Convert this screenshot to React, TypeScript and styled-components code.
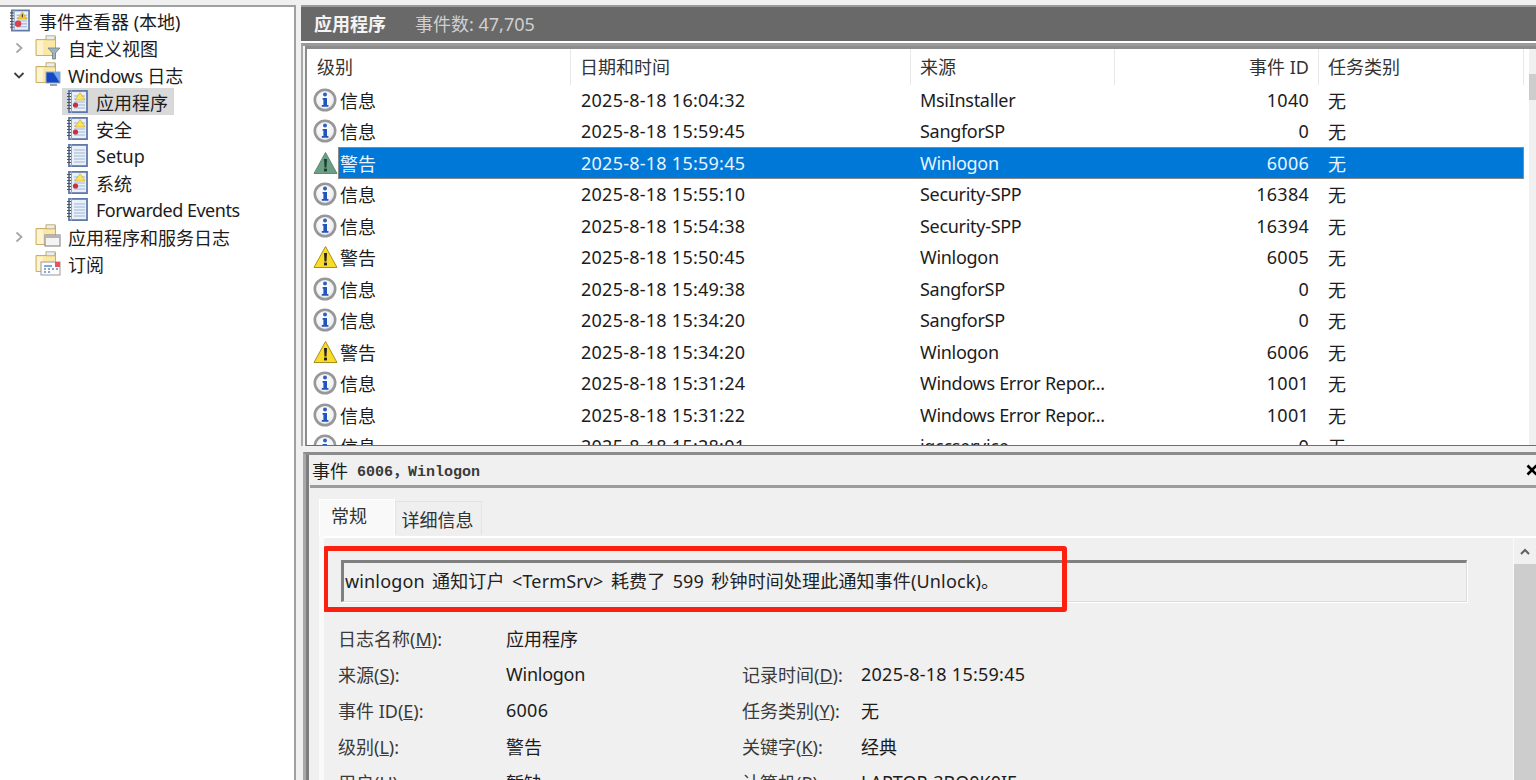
import React from "react";
import styled, { createGlobalStyle } from "styled-components";

const Global = createGlobalStyle`
  html, body { margin: 0; padding: 0; width: 1536px; height: 780px; overflow: hidden; background: #f0f0f0; }
  #root { width: 1536px; height: 780px; }
  * { box-sizing: border-box; }
`;

const Page = styled.div`
  width: 1536px;
  height: 780px;
  overflow: hidden;
  display: flex;
  gap: 5px;
  padding-top: 5px;
  background: #f0f0f0;
  font-family: "Noto Sans", "Noto Sans CJK SC", sans-serif;
  font-size: 18px;
  color: #1c1c1c;
`;
const Latin = styled.span<{ $s?: number }>`
  letter-spacing: ${(p) => p.$s ?? -0.3}px;
`;

/* ---------- tree ---------- */
const TreePane = styled.nav`
  width: 296px;
  flex: none;
  height: 775px;
  background: #fff;
  border-top: 2px solid #a0a0a0;
  border-right: 2px solid #a0a0a0;
`;
const TreeRow = styled.div<{ $level: number }>`
  height: 27px;
  display: flex;
  align-items: center;
  padding-left: ${(p) => (p.$level === 0 ? 9 : p.$level === 1 ? 12 : 62)}px;
  white-space: nowrap;
`;
const Chevron = styled.span`
  width: 14px;
  height: 14px;
  margin-right: 5px;
  flex: none;
  display: flex;
`;
const ChevronSpacer = styled.span`
  width: 14px;
  margin-right: 5px;
  flex: none;
`;
const NodeBody = styled.span<{ $active?: boolean }>`
  display: flex;
  align-items: center;
  gap: ${(p) => (p.$active !== undefined ? 8 : 7)}px;
  height: 27px;
  padding: 0 6px 0 4px;
  background: ${(p) => (p.$active ? "#d9d9d9" : "transparent")};
`;
const RootBody = styled.span`
  display: flex;
  align-items: center;
  gap: 9px;
`;

/* ---------- right side ---------- */
const Right = styled.main`
  flex: 1;
  min-width: 0;
  height: 775px;
  display: flex;
  flex-direction: column;
`;
const TitleBar = styled.header`
  height: 36px;
  flex: none;
  background: #696969;
  border-top: 2px solid #9a9a9a;
  display: flex;
  align-items: center;
  gap: 29px;
  padding: 0 0 3px 13px;
  color: #f4f4f4;
`;
const TitleMain = styled.b`
  font-weight: 700;
  font-size: 18px;
`;
const TitleCount = styled.span`
  color: #d0d0d0;
`;
const ListOuter = styled.section`
  height: 405px;
  flex: none;
  border-top: 2px solid #fff;
  background: #f0f0f0;
`;
const ListFrame = styled.div`
  height: 100%;
  border-top: 3px solid #9a9a9a;
  border-left: 2px solid #a8a8a8;
  padding: 0 0 0 2px;
  background: #f4f4f4;
`;
const ListInner = styled.div`
  height: 100%;
  border-top: 3px solid #8c8c8c;
  border-left: 2px solid #8c8c8c;
  border-bottom: 1px solid #6e6e6e;
  display: flex;
  background: #fff;
  overflow: hidden;
`;
const ListMain = styled.div`
  width: 1222px;
  flex: none;
  overflow: hidden;
`;
const columns = "233px 340px 204px 204px 205px";
const HeaderRow = styled.div`
  height: 35px;
  display: grid;
  grid-template-columns: 264px 340px 204px 204px 205px;
  align-items: start;
  color: #333;
`;
const HeaderCell = styled.div<{ $right?: boolean; $first?: boolean }>`
  display: flex;
  align-items: center;
  justify-content: ${(p) => (p.$right ? "flex-end" : "flex-start")};
  padding: 0 9px 3px ${(p) => (p.$first ? 10 : 9)}px;
  border-right: 1px solid #e8e8e8;
  height: 36px;
`;
const Row = styled.div`
  height: 31.5px;
  display: flex;
  align-items: center;
`;
const LevelIcon = styled.span`
  width: 31px;
  height: 31.5px;
  flex: none;
  display: flex;
  align-items: center;
  padding-left: 6px;
`;
const RowBody = styled.div<{ $selected?: boolean }>`
  width: 1186px;
  height: 31.5px;
  display: grid;
  grid-template-columns: ${columns};
  align-items: center;
  background: ${(p) => (p.$selected ? "#0078d7" : "transparent")};
  color: ${(p) => (p.$selected ? "#e8f4ff" : "#1c1c1c")};
  outline: ${(p) => (p.$selected ? "1px solid #8a8a8a" : "none")};
  outline-offset: -1px;
`;
const Cell = styled.span<{ $right?: boolean; $pad?: number; $s?: number }>`
  padding: 0 ${(p) => (p.$right ? 10 : 0)}px 0 ${(p) => (p.$pad ?? 9)}px;
  text-align: ${(p) => (p.$right ? "right" : "left")};
  letter-spacing: ${(p) => p.$s ?? 0}px;
  white-space: nowrap;
  overflow: hidden;
`;
const ListScroll = styled.div`
  width: 7px;
  flex: none;
  background: #f0f0f0;
  padding-top: 25px;
`;
const ListThumb = styled.div`
  height: 26px;
  background: #cdcdcd;
`;

/* ---------- detail ---------- */
const Detail = styled.section`
  flex: 1;
  min-height: 0;
  margin-left: 2px;
  background: #f0f0f0;
  padding-top: 6px;
  display: flex;
  flex-direction: column;
`;
const DetailFrame = styled.div`
  flex: 1;
  min-height: 0;
  border-top: 3px solid #8c8c8c;
  border-left: 3px solid #a8a8a8;
  display: flex;
  flex-direction: column;
  overflow: hidden;
`;
const DetailInner = styled.div`
  flex: 1;
  min-height: 0;
  border-left: 3px solid #7e7e7e;
  padding-left: 1px;
  display: flex;
  flex-direction: column;
`;
const DetailHead = styled.div`
  height: 33px;
  flex: none;
  display: flex;
  align-items: center;
  justify-content: space-between;
  border-bottom: 3px solid #9c9c9c;
  padding-left: 2px;
  overflow: hidden;
`;
const HeadLabel = styled.span`
  display: flex;
  align-items: center;
  gap: 9px;
`;
const HeadMono = styled.span`
  font-family: "Liberation Mono", "Noto Sans CJK SC", monospace;
  font-size: 15px;
  font-weight: 700;
  color: #3a3a3a;
`;
const CloseMark = styled.span`
  display: flex;
  margin-right: -2px;
`;
const Tabs = styled.div`
  height: 48px;
  flex: none;
  display: flex;
  align-items: flex-end;
  padding-left: 9px;
`;
const Tab = styled.div<{ $active?: boolean }>`
  display: flex;
  align-items: center;
  justify-content: center;
  height: ${(p) => (p.$active ? 37 : 34)}px;
  width: ${(p) => (p.$active ? 76 : 87)}px;
  margin-bottom: ${(p) => (p.$active ? 0 : 1)}px;
  padding-bottom: ${(p) => (p.$active ? 6 : 0)}px;
  padding-right: ${(p) => (p.$active ? 16 : 2)}px;
  background: ${(p) => (p.$active ? "#f9f9f9" : "#efefef")};
  border: 1px solid ${(p) => (p.$active ? "#fff" : "#e2e2e2")};
  border-bottom: none;
  color: #333;
`;
const TabBody = styled.div`
  flex: 1;
  min-height: 0;
  margin-left: 9px;
  border-left: 5px solid #fafafa;
  display: flex;
`;
const TabContent = styled.div`
  flex: 1;
  min-width: 0;
  border-top: 2px solid #fff;
  padding: 22px 46px 0 17px;
  background: #f0f0f0;
  overflow: hidden;
`;
const MessageWrap = styled.div`
  position: relative;
`;
const MessageBox = styled.div`
  height: 42px;
  display: flex;
  align-items: center;
  padding: 0 0 4px 1px;
  border-top: 3px solid #808080;
  border-left: 3px solid #808080;
  border-right: 1px solid #dcdcdc;
  border-bottom: 1px solid #dcdcdc;
  box-shadow: 1px 1px 0 #fff;
  color: #222;
  white-space: pre;
  letter-spacing: 0.15px;
  word-spacing: 2.5px;
`;
const RedMark = styled.div`
  position: absolute;
  left: -18px;
  top: -14px;
  width: 744px;
  height: 66px;
  border: 5px solid #fb2010;
  border-radius: 3px;
  pointer-events: none;
`;
const Fields = styled.div`
  margin: 18px 0 0 -3px;
  display: grid;
  grid-template-columns: 168px 236px 119px 1fr;
  grid-auto-rows: 36px;
  align-items: center;
  white-space: nowrap;
`;
const FieldLabel = styled.span`
  color: #3a3a3a;
`;
const FieldValue = styled.span<{ $s?: number }>`
  color: #1c1c1c;
  letter-spacing: ${(p) => p.$s ?? 0}px;
`;
const PanelScroll = styled.div`
  width: 23px;
  flex: none;
  background: #f0f0f0;
  border-top: 2px solid #fff;
  border-left: 1px solid #fafafa;
`;
const ScrollUp = styled.div`
  height: 26px;
  display: flex;
  align-items: center;
  justify-content: center;
`;
const ScrollThumb = styled.div`
  height: 240px;
  background: #cdcdcd;
`;

/* ---------- icons ---------- */
const Info = () => (
  <svg width="24" height="24" viewBox="0 0 24 24">
    <defs>
      <radialGradient id="infoFill" cx="45%" cy="40%" r="65%">
        <stop offset="0" stopColor="#ffffff" />
        <stop offset="0.7" stopColor="#eef0f4" />
        <stop offset="1" stopColor="#c8ccd4" />
      </radialGradient>
    </defs>
    <circle cx="12" cy="12" r="10.2" fill="url(#infoFill)" stroke="#979797" strokeWidth="2.6" />
    <circle cx="12" cy="6.6" r="2" fill="#2f5fc4" />
    <path d="M9.6 10h4.4v7h1.4v1.8H8.8V17h1.6v-5.2H9.6z" fill="#2255bb" />
  </svg>
);
const Warn = ({ muted }: { muted?: boolean }) => (
  <svg width="25" height="24" viewBox="0 0 25 24">
    <path
      d="M12.5 1.5 24 22.5H1z"
      fill={muted ? "#6b9f85" : "#f9dc2b"}
      stroke={muted ? "#5d8a74" : "#a88f1a"}
      strokeWidth="1"
      strokeLinejoin="round"
    />
    <path d="M11 8h3l-.5 8.5h-2z" fill={muted ? "#1e3f30" : "#222"} />
    <rect x="11" y="17.6" width="3" height="2.8" fill={muted ? "#1e3f30" : "#222"} />
  </svg>
);
const LogBook = ({ badge, big }: { badge?: boolean; big?: boolean }) => (
  <svg width={big ? 21 : 22} height="23" viewBox="0 0 22 23">
    <rect x="3" y="0.9" width="18" height="21.2" fill="#eaf0f8" stroke="#5f79a8" strokeWidth="1.8" />
    <path d="M5.5 0v23" stroke="#8ea2c4" strokeWidth="1" />
    <path d="M1 3.5h4M1 6.5h4M1 9.5h4M1 12.5h4M1 15.5h4M1 18.5h4" stroke="#555" strokeWidth="1.1" />
    <path d="M8 6h11M8 9h11M8 12h11M8 15h11M8 18h11" stroke="#9bb3d6" strokeWidth="1.2" />
    {badge && (
      <>
        <path d="M14 2.5l5 7.5h-10z" fill={big ? "#f6c93a" : "#fbe35a"} stroke="#c9a422" strokeWidth="0.6" />
        {big && <path d="M13.4 5h1.2v3h-1.2z" fill="#333" />}
        <circle cx="9.5" cy="15" r={big ? 3.4 : 2.6} fill={big ? "#d9404a" : "#c8303c"} />
      </>
    )}
  </svg>
);
const Folder = ({ children }: { children?: React.ReactNode }) => (
  <svg width="26" height="25" viewBox="0 0 26 25">
    <path d="M1 4.5h10l2-3h7.5v19H1z" fill="#fbe7a6" stroke="#c8b06a" strokeWidth="1" />
    <rect x="11" y="0.8" width="9" height="4" fill="#e6eef5" stroke="#b99f58" strokeWidth="0.8" />
    <path d="M2 6h6v14H2z" fill="#fff4cf" />
    {children}
  </svg>
);
const ChevronRight = () => (
  <svg width="14" height="14" viewBox="0 0 14 14" fill="none">
    <path d="M4.5 2.5 9.5 7l-5 4.5" stroke="#a6a6a6" strokeWidth="1.8" />
  </svg>
);
const ChevronDown = () => (
  <svg width="14" height="14" viewBox="0 0 14 14" fill="none">
    <path d="M2.5 5 7 9.5 11.5 5" stroke="#404040" strokeWidth="1.8" />
  </svg>
);
const CloseIcon = () => (
  <svg width="12" height="12" viewBox="0 0 12 12">
    <path d="M1.5 1.5l9 9M10.5 1.5l-9 9" stroke="#000" strokeWidth="2.6" />
  </svg>
);
const UpIcon = () => (
  <svg width="12" height="9" viewBox="0 0 12 9" fill="none">
    <path d="M2 7l4-4 4 4" stroke="#606060" strokeWidth="2" />
  </svg>
);

/* ---------- data ---------- */
type Ev = { l: "i" | "w"; d: string; s: string; id: string; sel?: boolean };
const events: Ev[] = [
  { l: "i", d: "2025-8-18 16:04:32", s: "MsiInstaller", id: "1040" },
  { l: "i", d: "2025-8-18 15:59:45", s: "SangforSP", id: "0" },
  { l: "w", d: "2025-8-18 15:59:45", s: "Winlogon", id: "6006", sel: true },
  { l: "i", d: "2025-8-18 15:55:10", s: "Security-SPP", id: "16384" },
  { l: "i", d: "2025-8-18 15:54:38", s: "Security-SPP", id: "16394" },
  { l: "w", d: "2025-8-18 15:50:45", s: "Winlogon", id: "6005" },
  { l: "i", d: "2025-8-18 15:49:38", s: "SangforSP", id: "0" },
  { l: "i", d: "2025-8-18 15:34:20", s: "SangforSP", id: "0" },
  { l: "w", d: "2025-8-18 15:34:20", s: "Winlogon", id: "6006" },
  { l: "i", d: "2025-8-18 15:31:24", s: "Windows Error Repor...", id: "1001" },
  { l: "i", d: "2025-8-18 15:31:22", s: "Windows Error Repor...", id: "1001" },
  { l: "i", d: "2025-8-18 15:28:01", s: "igccservice", id: "0" },
];

const logNodes: { t: string; badge: boolean; active?: boolean }[] = [
  { t: "应用程序", badge: true, active: true },
  { t: "安全", badge: true },
  { t: "Setup", badge: false },
  { t: "系统", badge: true },
  { t: "Forwarded Events", badge: false },
];

const Mn = ({ pre, k }: { pre: string; k: string }) => (
  <FieldLabel>
    {pre}(<u>{k}</u>):
  </FieldLabel>
);

export default function App() {
  return (
    <Page>
      <Global />
      <TreePane>
        <TreeRow $level={0}>
          <RootBody>
            <LogBook badge big />
            事件查看器 (本地)
          </RootBody>
        </TreeRow>
        <TreeRow $level={1}>
          <Chevron><ChevronRight /></Chevron>
          <NodeBody>
            <Folder>
              <path d="M13 13h12l-4.5 5v6h-3v-6z" fill="#9fb2bd" stroke="#6d7f88" strokeWidth="0.8" />
            </Folder>
            自定义视图
          </NodeBody>
        </TreeRow>
        <TreeRow $level={1}>
          <Chevron><ChevronDown /></Chevron>
          <NodeBody>
            <Folder>
              <rect x="11" y="10" width="14" height="11" fill="#1546c8" stroke="#9aa8b4" strokeWidth="1" />
              <path d="M18 10h7v11z" fill="#6fa6e8" />
              <path d="M15 22h7v2h-7z" fill="#98a4ac" />
            </Folder>
            <span><Latin $s={-0.3}>Windows </Latin>日志</span>
          </NodeBody>
        </TreeRow>
        {logNodes.map((n) => (
          <TreeRow $level={2} key={n.t}>
            <NodeBody $active={!!n.active}>
              <LogBook badge={n.badge} />
              <Latin $s={n.t === "Forwarded Events" ? -0.5 : 0}>{n.t}</Latin>
            </NodeBody>
          </TreeRow>
        ))}
        <TreeRow $level={1}>
          <Chevron><ChevronRight /></Chevron>
          <NodeBody>
            <Folder>
              <rect x="10" y="11" width="15" height="11" fill="#f4f4f4" stroke="#8e8e8e" strokeWidth="1.2" />
              <rect x="10" y="11" width="15" height="3" fill="#b5b5b5" />
            </Folder>
            应用程序和服务日志
          </NodeBody>
        </TreeRow>
        <TreeRow $level={1}>
          <ChevronSpacer />
          <NodeBody>
            <Folder>
              <rect x="6" y="11" width="19" height="13" fill="#fdfdfd" stroke="#9a9a9a" strokeWidth="1" />
              <rect x="20" y="11" width="5" height="5" fill="#e8545c" />
              <path d="M9 15h8M9 18h2M13 18h2M17 18h2M21 18h2M9 21h2M13 21h2" stroke="#5a8fc8" strokeWidth="1.4" />
            </Folder>
            订阅
          </NodeBody>
        </TreeRow>
      </TreePane>

      <Right>
        <TitleBar>
          <TitleMain>应用程序</TitleMain>
          <TitleCount>事件数: 47,705</TitleCount>
        </TitleBar>
        <ListOuter>
          <ListFrame>
            <ListInner>
              <ListMain>
                <HeaderRow>
                  <HeaderCell $first>级别</HeaderCell>
                  <HeaderCell>日期和时间</HeaderCell>
                  <HeaderCell>来源</HeaderCell>
                  <HeaderCell $right>事件 ID</HeaderCell>
                  <HeaderCell>任务类别</HeaderCell>
                </HeaderRow>
                {events.map((e, i) => (
                  <Row key={i}>
                    <LevelIcon>{e.l === "i" ? <Info /> : <Warn muted={e.sel} />}</LevelIcon>
                    <RowBody $selected={e.sel}>
                      <Cell $pad={2}>{e.l === "i" ? "信息" : "警告"}</Cell>
                      <Cell $pad={10} $s={0.25}>{e.d}</Cell>
                      <Cell $s={-0.3}>{e.s}</Cell>
                      <Cell $right $s={0.25}>{e.id}</Cell>
                      <Cell>无</Cell>
                    </RowBody>
                  </Row>
                ))}
              </ListMain>
              <ListScroll>
                <ListThumb />
              </ListScroll>
            </ListInner>
          </ListFrame>
        </ListOuter>
        <Detail>
          <DetailFrame>
            <DetailInner>
              <DetailHead>
                <HeadLabel>
                  事件
                  <HeadMono>6006，Winlogon</HeadMono>
                </HeadLabel>
                <CloseMark><CloseIcon /></CloseMark>
              </DetailHead>
              <Tabs>
                <Tab $active>常规</Tab>
                <Tab>详细信息</Tab>
              </Tabs>
              <TabBody>
                <TabContent>
                  <MessageWrap>
                    <MessageBox>winlogon 通知订户 &lt;TermSrv&gt; 耗费了 599 秒钟时间处理此通知事件(Unlock)。</MessageBox>
                    <RedMark />
                  </MessageWrap>
                  <Fields>
                    <Mn pre="日志名称" k="M" />
                    <FieldValue>应用程序</FieldValue>
                    <span />
                    <span />
                    <Mn pre="来源" k="S" />
                    <FieldValue $s={-0.25}>Winlogon</FieldValue>
                    <Mn pre="记录时间" k="D" />
                    <FieldValue $s={0.25}>2025-8-18 15:59:45</FieldValue>
                    <Mn pre="事件 ID" k="E" />
                    <FieldValue $s={0.25}>6006</FieldValue>
                    <Mn pre="任务类别" k="Y" />
                    <FieldValue>无</FieldValue>
                    <Mn pre="级别" k="L" />
                    <FieldValue>警告</FieldValue>
                    <Mn pre="关键字" k="K" />
                    <FieldValue>经典</FieldValue>
                    <Mn pre="用户" k="U" />
                    <FieldValue>暂缺</FieldValue>
                    <Mn pre="计算机" k="R" />
                    <FieldValue>LAPTOP-3BO0K0IF</FieldValue>
                  </Fields>
                </TabContent>
                <PanelScroll>
                  <ScrollUp><UpIcon /></ScrollUp>
                  <ScrollThumb />
                </PanelScroll>
              </TabBody>
            </DetailInner>
          </DetailFrame>
        </Detail>
      </Right>
    </Page>
  );
}
